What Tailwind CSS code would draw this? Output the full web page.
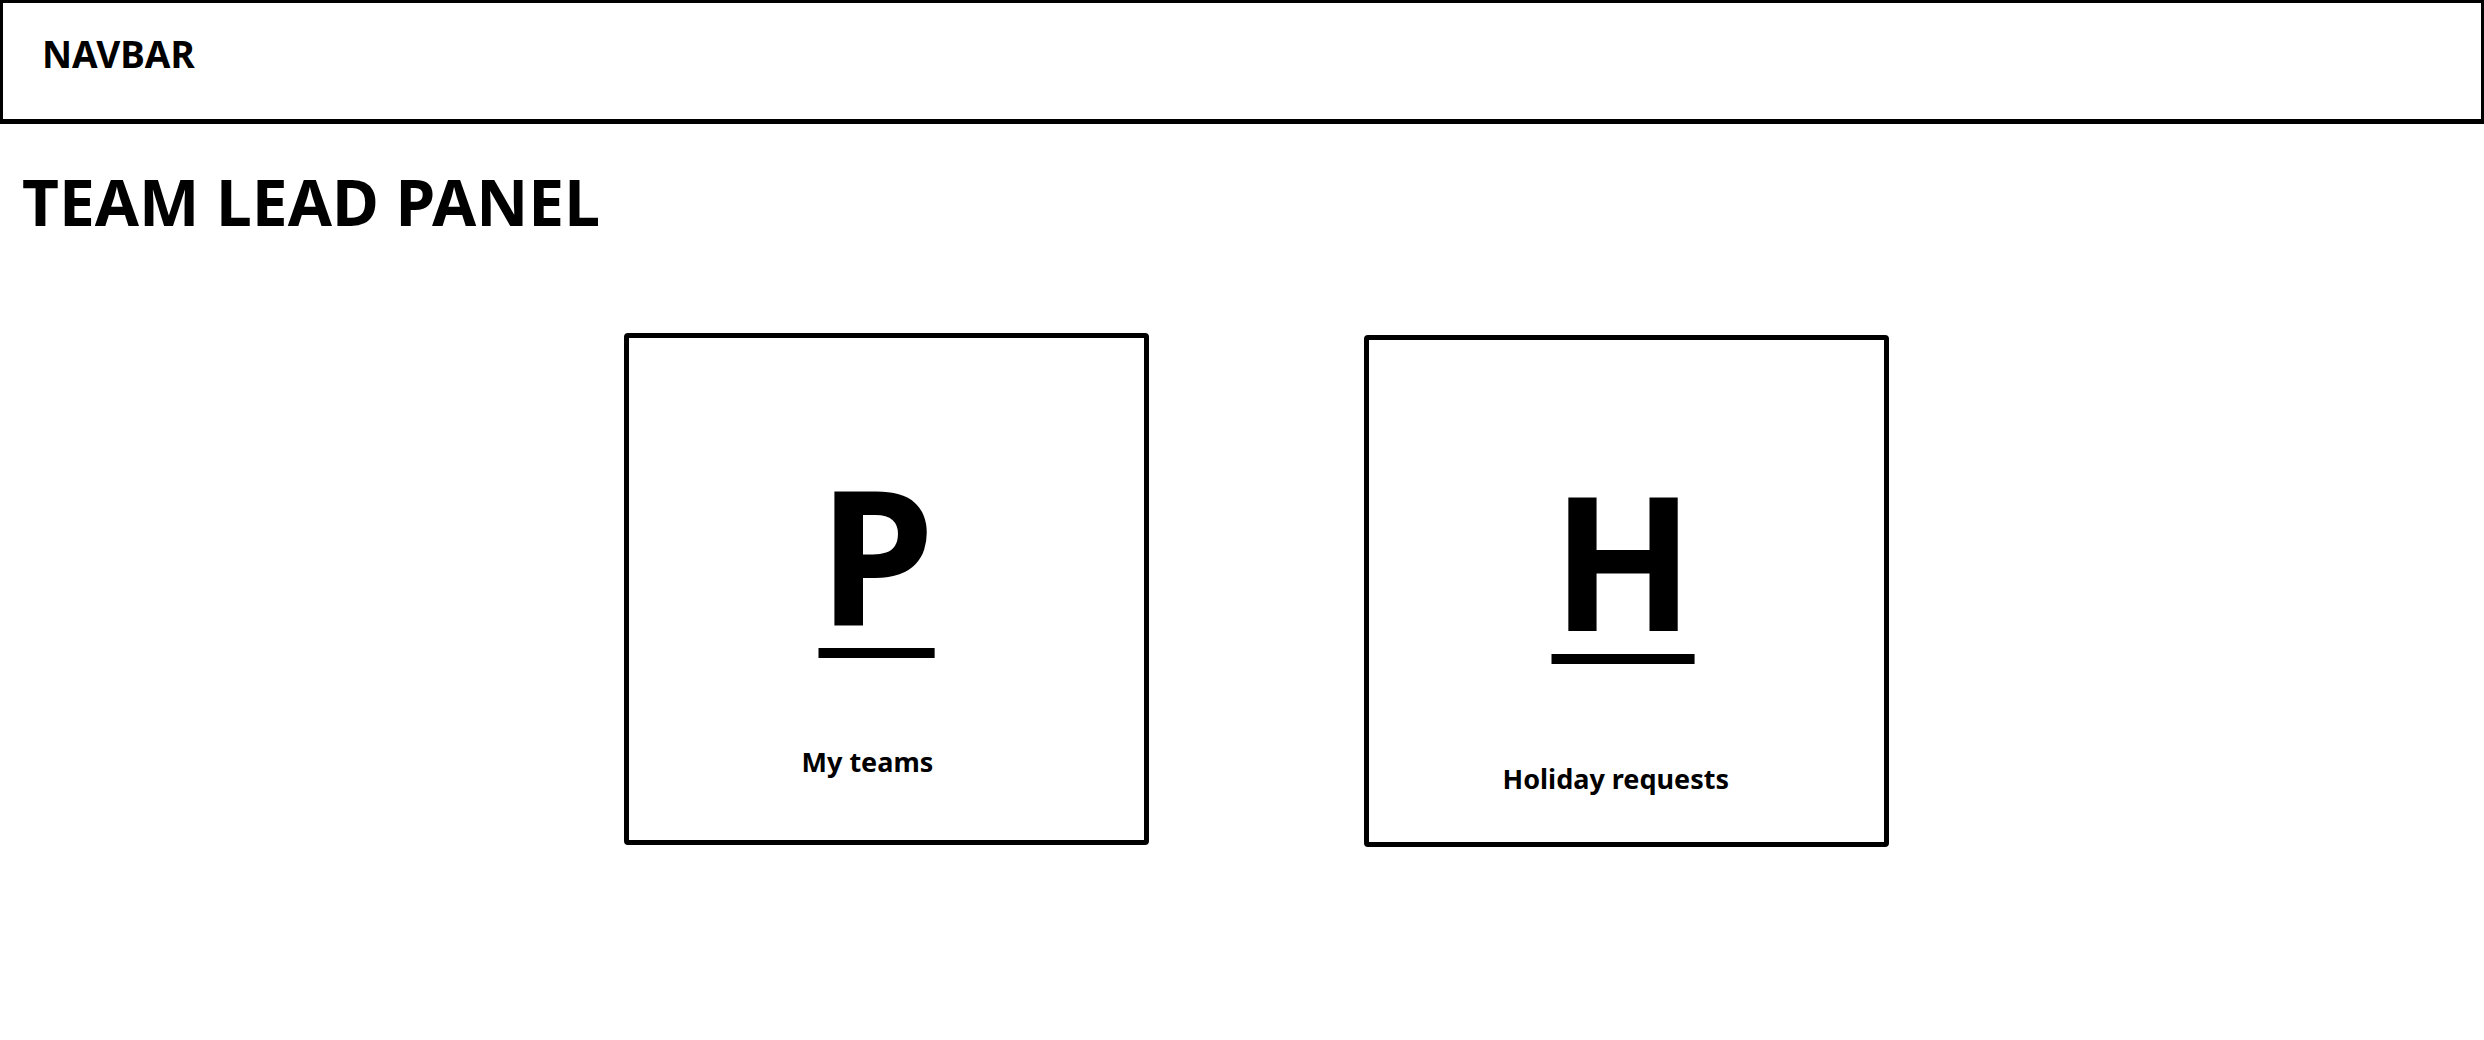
<!DOCTYPE html>
<html lang="en">
<head>
<meta charset="utf-8">
<meta name="viewport" content="width=device-width, initial-scale=1">
<title>Team Lead Panel</title>
<script src="https://cdn.jsdelivr.net/npm/@tailwindcss/browser@4"></script>
</head>
<body class="bg-white font-['Noto_Sans',sans-serif] font-bold text-black">
  <header class="border-[3px] border-b-[5px] border-black px-[39px] pt-[31px] pb-[45px]">
    <p class="text-[37px] leading-10">NAVBAR</p>
  </header>
  <main>
    <h1 class="mt-[46px] px-[22px] text-[64px] leading-16">TEAM LEAD PANEL</h1>
    <nav aria-label="Team lead" class="mt-[99px] flex items-start justify-center gap-[215px] pl-7">
      <a href="#teams" class="flex h-[512px] w-[525px] flex-col items-start gap-[99px] rounded-sm border-5 border-black pt-[121px]">
        <span class="ml-[190px] text-[187px] leading-[188px] underline decoration-[10px] underline-offset-[23px]">P</span>
        <span class="ml-[173px] text-[27px] leading-8">My teams</span>
      </a>
      <a href="#holidays" class="mt-0.5 flex h-[512px] w-[525px] flex-col items-start gap-[110px] rounded-sm border-5 border-black pt-[125px]">
        <span class="ml-[183px] text-[187px] leading-[188px] underline decoration-[10px] underline-offset-[23px]">H</span>
        <span class="ml-[134px] text-[27px] leading-8">Holiday requests</span>
      </a>
    </nav>
  </main>
</body>
</html>
